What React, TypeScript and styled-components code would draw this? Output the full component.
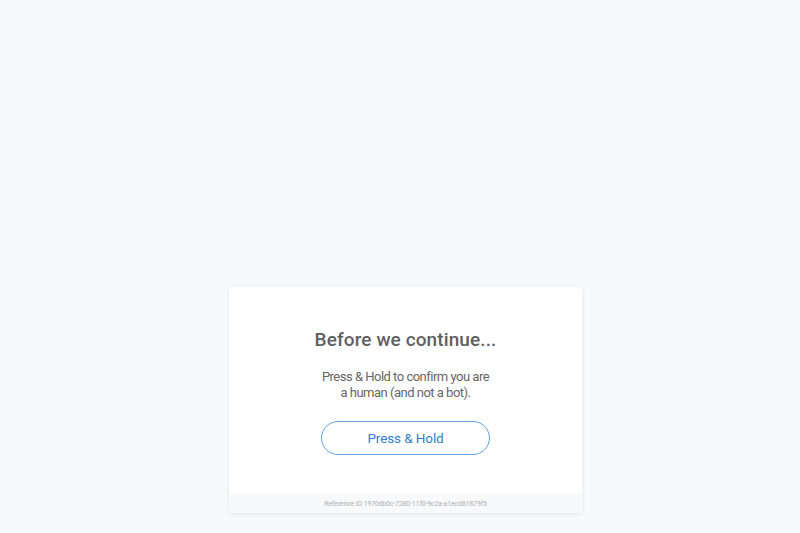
import React from "react";
import styled, { createGlobalStyle } from "styled-components";

const Global = createGlobalStyle`
  html, body { margin: 0; padding: 0; background: #f8f9fb; }
  body { font-family: Roboto, "Liberation Sans", sans-serif; }
`;

const Page = styled.div`
  width: 800px;
  height: 533px;
  box-sizing: border-box;
  padding: 287px 0 0 11px;
  display: flex;
  justify-content: center;
  align-items: flex-start;
`;

const Card = styled.div`
  width: 353px;
  height: 226px;
  background: #fff;
  border-radius: 2px;
  box-shadow: 0 1px 4px rgba(0, 0, 0, 0.08);
  display: flex;
  flex-direction: column;
  overflow: hidden;
`;

const Body = styled.div`
  flex: 1;
  display: flex;
  flex-direction: column;
  align-items: center;
  padding-top: 41px;
`;

const Title = styled.h1`
  margin: 0;
  font-size: 19px;
  letter-spacing: 0.1px;
  font-weight: 500;
  color: #5f5f5f;
  line-height: 24px;
`;

const Text = styled.p`
  margin: 17px 0 0;
  font-size: 13px;
  letter-spacing: -0.5px;
  line-height: 16px;
  color: #666;
  text-align: center;
  width: 171px;
`;

const Button = styled.button`
  margin-top: 20px;
  width: 169px;
  height: 34px;
  border: 1px solid #5ea3df;
  border-radius: 17px;
  background: #fff;
  color: #2f80cd;
  font-family: Roboto, "Liberation Sans", sans-serif;
  font-size: 13.5px;
  letter-spacing: -0.1px;
  cursor: pointer;
`;

const Footer = styled.div`
  height: 19px;
  background: #f8f9fb;
  display: flex;
  align-items: center;
  justify-content: center;
  font-size: 7px;
  letter-spacing: -0.17px;
  color: #b0b0b0;
`;

export default function App() {
  return (
    <>
      <Global />
      <Page>
        <Card>
          <Body>
            <Title>Before we continue...</Title>
            <Text>Press &amp; Hold to confirm you are a human (and not a bot).</Text>
            <Button>Press &amp; Hold</Button>
          </Body>
          <Footer>Reference ID 1970db0c-7280-11f0-9c2a-a1ecd81879f5</Footer>
        </Card>
      </Page>
    </>
  );
}
